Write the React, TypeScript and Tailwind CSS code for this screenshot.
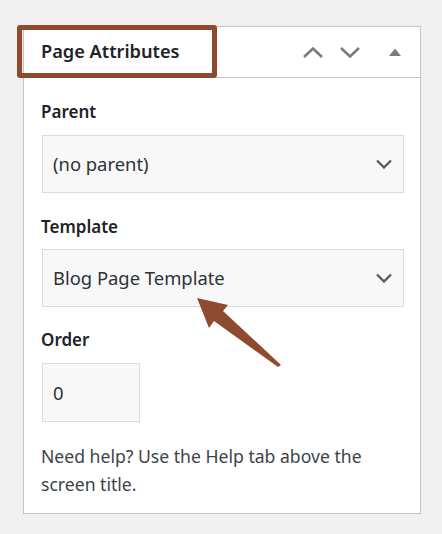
import React from "react";

const font = { fontFamily: '"Noto Sans", "Open Sans", sans-serif' };

function Chevron() {
  return (
    <svg width="16" height="10" viewBox="0 0 16 10" className="shrink-0">
      <polyline points="1,1.5 8,8.5 15,1.5" fill="none" stroke="#50575e" strokeWidth="2.2" />
    </svg>
  );
}

function SelectBox({ value }: { value: string }) {
  return (
    <div className="flex h-[58px] w-[362px] items-center justify-between border border-[#dcdcde] bg-[#f8f8f8] pl-[10px] pr-[11px]">
      <span className="text-[18.4px] text-[#2c3338]">{value}</span>
      <Chevron />
    </div>
  );
}

export default function App() {
  return (
    <div className="relative h-[534px] w-[442px] bg-[#f0f0f1] pt-[26px] pl-[23px]" style={font}>
      <div className="w-[398px] border border-[#c3c4c7] bg-white">
        <div className="flex h-[51px] items-center justify-between border-b border-[#c3c4c7] pl-[17px] pr-[19px]">
          <span className="text-[18.2px] font-semibold text-[#1d2327]">Page Attributes</span>
          <div className="flex items-center">
            <svg width="20" height="11" viewBox="0 0 20 11">
              <polyline points="1,10 10,1.5 19,10" fill="none" stroke="#787c82" strokeWidth="2.6" />
            </svg>
            <svg width="20" height="11" viewBox="0 0 20 11" className="ml-[17px]">
              <polyline points="1,1 10,9.5 19,1" fill="none" stroke="#787c82" strokeWidth="2.6" />
            </svg>
            <svg width="12" height="8" viewBox="0 0 12 8" className="ml-[29px]">
              <polygon points="0,8 6,0.5 12,8" fill="#787c82" />
            </svg>
          </div>
        </div>
        <div className="pl-[17px] pt-[22px] pb-[15px]">
          <div className="h-[24px] text-[17px] font-semibold leading-[24px] text-[#1d2327]">Parent</div>
          <div className="mt-[11px] pl-[1px]">
            <SelectBox value="(no parent)" />
          </div>
          <div className="mt-[22px] h-[24px] text-[17px] font-semibold leading-[24px] text-[#1d2327]">Template</div>
          <div className="mt-[10px] pl-[1px]">
            <SelectBox value="Blog Page Template" />
          </div>
          <div className="mt-[21px] h-[24px] text-[17px] font-semibold leading-[24px] text-[#1d2327]">Order</div>
          <div className="ml-[1px] mt-[11px] flex h-[59px] w-[98px] items-center border border-[#dcdcde] bg-[#f8f8f8] pl-[10px] text-[18.4px] text-[#2c3338]">
            0
          </div>
          <p className="mt-[20px] w-[362px] text-[17.6px] leading-[28px] text-[#3c434a]">
            Need help? Use the Help tab above the screen title.
          </p>
        </div>
      </div>

      <div className="pointer-events-none absolute left-[17px] top-[25px] h-[53px] w-[200px] rounded-[3px] border-[5px] border-[#8f4b2f]" />

      <svg className="pointer-events-none absolute left-0 top-0" width="442" height="534" viewBox="0 0 442 534">
        <polygon
          points="197,298 228,305 223,311 281,365 278,367 214,321 209,328"
          fill="#8f4b2f"
        />
      </svg>
    </div>
  );
}
